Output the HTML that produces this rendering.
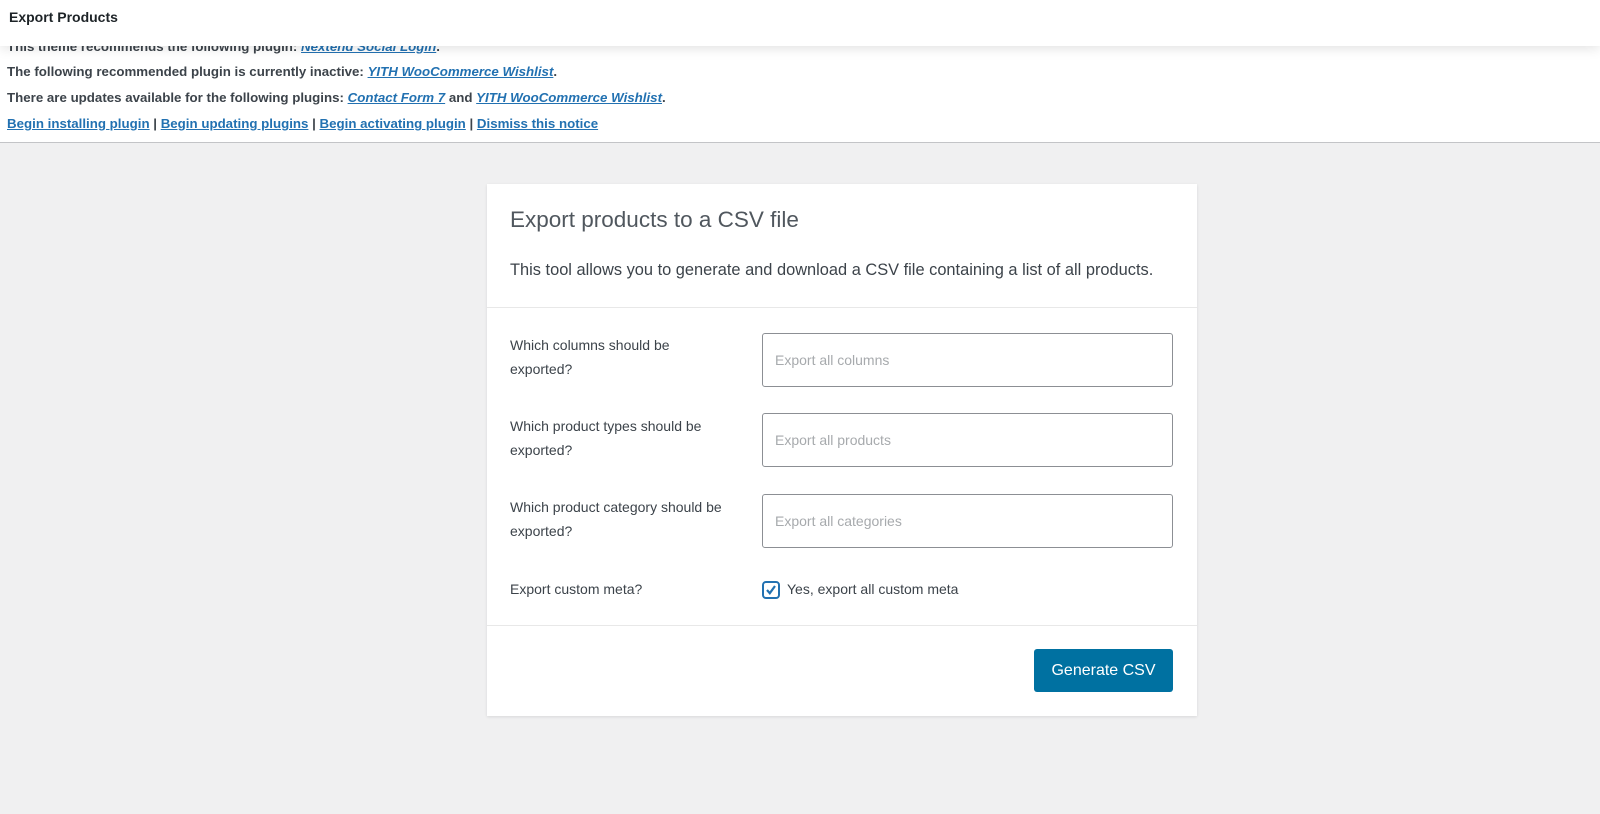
<!DOCTYPE html>
<html><head><meta charset="utf-8"><style>
*{box-sizing:border-box;margin:0;padding:0}
html,body{width:1600px;height:814px;overflow:hidden;background:#f0f0f1;font-family:"Liberation Sans",Arial,sans-serif;color:#3c434a}
.top{position:absolute;left:0;top:0;width:1600px;height:46px;background:#fff;box-shadow:0 2px 12px rgba(0,0,0,.12);z-index:2}
.top h1{position:absolute;left:9px;top:9px;font-size:14px;font-weight:bold;color:#1d2327}
.notice{position:absolute;left:0;top:0;width:1600px;height:143px;background:#fff;border-bottom:1px solid #c3c4c7;font-size:13.3px;font-weight:bold;color:#3c434a}
.notice p{position:absolute;left:7px;white-space:nowrap}
.notice a{color:#2271b1;text-decoration:underline}
.notice i{font-style:italic}
.card{position:absolute;left:487px;top:184px;width:710px;height:532px;background:#fff;box-shadow:0 1px 3px rgba(0,0,0,.1)}
.card h2{position:absolute;left:23px;top:23px;font-size:22.5px;font-weight:normal;color:#50575e}
.desc{position:absolute;left:23px;top:77px;font-size:16.4px;color:#3c434a}
.hr{position:absolute;left:0;width:710px;height:1px;background:#e8e8e8}
.lbl{position:absolute;left:23px;font-size:14px;line-height:24px;color:#3c434a}
.inp{position:absolute;left:275px;width:411px;height:54px;border:1px solid #8c8f94;border-radius:3px;font-size:14px;color:#a7aaad;padding:18px 12px}
.cb{position:absolute;left:275px;top:397px;width:18px;height:18px;border:2px solid #2271b1;border-radius:4px}
.btn{position:absolute;left:547px;top:465px;width:139px;height:43px;background:#0071a1;border-radius:3px;color:#fff;font-size:16px;text-align:center;line-height:43px}
</style></head><body>
<div class="notice">
<p style="top:39px">This theme recommends the following plugin: <a><i>Nextend Social Login</i></a>.</p>
<p style="top:64px">The following recommended plugin is currently inactive: <a><i>YITH WooCommerce Wishlist</i></a>.</p>
<p style="top:90px">There are updates available for the following plugins: <a><i>Contact Form 7</i></a> and <a><i>YITH WooCommerce Wishlist</i></a>.</p>
<p style="top:116px"><a>Begin installing plugin</a> | <a>Begin updating plugins</a> | <a>Begin activating plugin</a> | <a>Dismiss this notice</a></p>
</div>
<div class="top"><h1>Export Products</h1></div>
<div class="card">
<h2>Export products to a CSV file</h2>
<div class="desc">This tool allows you to generate and download a CSV file containing a list of all products.</div>
<div class="hr" style="top:123px"></div>
<div class="lbl" style="top:149px">Which columns should be<br>exported?</div>
<div class="inp" style="top:149px">Export all columns</div>
<div class="lbl" style="top:230px">Which product types should be<br>exported?</div>
<div class="inp" style="top:229px">Export all products</div>
<div class="lbl" style="top:311px">Which product category should be<br>exported?</div>
<div class="inp" style="top:310px">Export all categories</div>
<div class="lbl" style="top:393px">Export custom meta?</div>
<div class="cb"><svg width="14" height="14" viewBox="0 0 14 14" style="position:absolute;left:0;top:0"><path d="M3 7 L5.8 10.2 L11 3" fill="none" stroke="#2271b1" stroke-width="2.2"/></svg></div>
<div class="lbl" style="top:393px;left:300px">Yes, export all custom meta</div>
<div class="hr" style="top:441px"></div>
<div class="btn">Generate CSV</div>
</div>
</body></html>
